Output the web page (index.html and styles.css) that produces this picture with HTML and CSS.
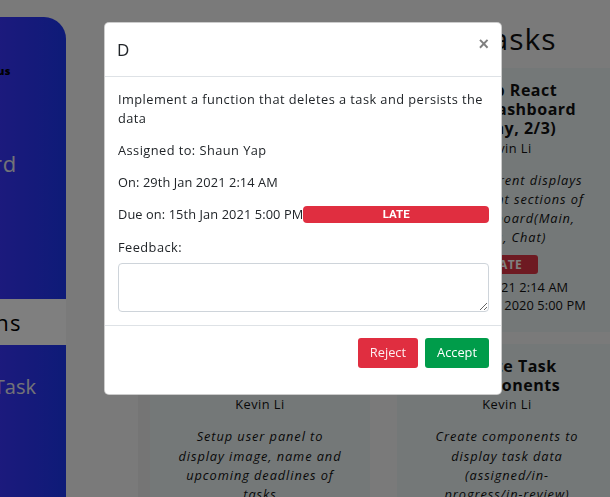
FILE: index.html
```html
<!DOCTYPE html>
<html lang="en">
<head>
<meta charset="utf-8">
<title>Tasks</title>
<link rel="stylesheet" href="styles.css">
</head>
<body>
<div class="app">
  <aside class="sidebar">
    <div class="brand">Zeus</div>
    <nav class="nav">
      <a class="nav-item nav-dash">Dashboard</a>
      <a class="nav-item nav-active">Submissions</a>
      <a class="nav-item nav-create">Create Task</a>
    </nav>
  </aside>
  <main class="main">
    <header class="page-head">
      <h1 class="page-title">Tasks</h1>
    </header>
    <section class="board">
      <article class="card">
        <h5 class="card-title">Setup User<br>Panel</h5>
        <p class="card-author">Kevin Li</p>
        <p class="card-desc">Setup user panel to<br>display image, name and<br>upcoming deadlines of<br>tasks</p>
      </article>
      <article class="card">
        <h5 class="card-title">Setup React<br>Main Dashboard<br>(Today, 2/3)</h5>
        <p class="card-author">Kevin Li</p>
        <p class="card-desc">Build different displays<br>for different sections of<br>the dashboard(Main,<br>Tasks, Chat)</p>
        <span class="card-badge">LATE</span>
        <p class="card-date">29 Jan 2021 2:14 AM<br>Due: 15 Dec 2020 5:00 PM</p>
      </article>
      <article class="card">
        <h5 class="card-title">Setup User<br>Panel</h5>
        <p class="card-author">Kevin Li</p>
        <p class="card-desc">Setup user panel to<br>display image, name and<br>upcoming deadlines of<br>tasks</p>
      </article>
      <article class="card">
        <h5 class="card-title">Create Task<br>Components</h5>
        <p class="card-author">Kevin Li</p>
        <p class="card-desc">Create components to<br>display task data<br>(assigned/in-<br>progress/in-review)</p>
      </article>
    </section>
  </main>
</div>

<div class="backdrop"></div>

<div class="modal">
  <div class="modal-content">
    <div class="modal-header">
      <h5 class="modal-title">D</h5>
      <button class="close" type="button" aria-label="Close">&times;</button>
    </div>
    <div class="modal-body">
      <p>Implement a function that deletes a task and persists the data</p>
      <p>Assigned to: Shaun Yap</p>
      <p class="dt">On: 29th Jan 2021 2:14 AM</p>
      <p class="dt due">Due on: 15th Jan 2021 5:00 PM<span class="badge-late">LATE</span></p>
      <label class="feedback-label" for="fb">Feedback:</label>
      <textarea id="fb" class="feedback"></textarea>
    </div>
    <div class="modal-footer">
      <button class="btn btn-reject" type="button">Reject</button>
      <button class="btn btn-accept" type="button">Accept</button>
    </div>
  </div>
</div>
</body>
</html>
```

FILE: styles.css
```css
* { box-sizing: border-box; }

html, body {
  margin: 0;
  height: 100%;
  overflow: hidden;
}

body {
  font-family: "Open Sans", "DejaVu Sans", sans-serif;
  font-size: 12.8px;
  line-height: 1.5;
  letter-spacing: 0.45px;
  color: #212529;
  background: #f4f4f4;
}

.app {
  display: flex;
  height: 497px;
  overflow: hidden;
}

/* ---------- sidebar ---------- */
.sidebar {
  flex: 0 0 66px;
  margin-top: 17px;
  border-top-right-radius: 22px;
  background: linear-gradient(90deg, #3834fa, #1c36f0);
  overflow: hidden;
  display: flex;
  flex-direction: column;
  padding-top: 46px;
}

.brand {
  display: flex;
  justify-content: flex-end;
  font-size: 11px;
  line-height: 16px;
  font-weight: 800;
  color: #000;
  padding-right: 55px;
  white-space: nowrap;
}

.nav {
  display: flex;
  flex-direction: column;
  margin-top: 61px;
}

.nav-item {
  display: flex;
  justify-content: flex-end;
  align-items: center;
  height: 46px;
  font-size: 22px;
  letter-spacing: 0.8px;
  white-space: nowrap;
  color: #e6e6ee;
}

.nav-dash { padding-right: 49px; }

.nav-active {
  margin-top: 113px;
  background: #fff;
  color: #000;
  padding-right: 44px;
  letter-spacing: 1.4px;
}

.nav-create {
  margin-top: 19px;
  font-size: 20px;
  letter-spacing: 0;
  padding-right: 30px;
}

/* ---------- main ---------- */
.main {
  flex: 1;
  min-width: 0;
  display: flex;
  flex-direction: column;
  overflow: hidden;
}

.page-head {
  flex: 0 0 68px;
  display: flex;
  align-items: flex-start;
  padding: 16px 0 0 408px;
}

.page-title {
  margin: 0;
  font-size: 30px;
  line-height: 45px;
  font-weight: 400;
  letter-spacing: 1px;
  color: #111;
  white-space: nowrap;
}

.board {
  margin-left: 72px;
  padding-left: 12px;
  display: grid;
  grid-template-columns: 220px 220px;
  column-gap: 27px;
  row-gap: 12px;
  align-items: start;
  background: linear-gradient(90deg, #ebebeb 12px, transparent 12px);
}

.card {
  background: #e8f0f0;
  padding: 13px 24px 18px;
  text-align: center;
  color: #111;
}

.card-title {
  margin: 0;
  font-size: 16px;
  line-height: 19.2px;
  font-weight: 700;
  letter-spacing: 0.5px;
  white-space: nowrap;
}

.card-author {
  margin: 0 0 13px;
  line-height: 19.2px;
}

.card-desc {
  margin: 0 0 7px;
  font-style: italic;
  line-height: 19.2px;
  letter-spacing: 0.92px;
  white-space: nowrap;
}

.card-badge {
  display: inline-block;
  vertical-align: top;
  width: 62px;
  height: 19px;
  line-height: 19px;
  border-radius: 3px;
  background: #dc3545;
  color: #fff;
  font-weight: 700;
  font-size: 12px;
}

.card-date {
  margin: 4px 0 0;
  line-height: 18px;
  letter-spacing: 0.1px;
  white-space: nowrap;
}

/* ---------- modal ---------- */
.backdrop {
  position: fixed;
  inset: 0;
  background: rgba(0, 0, 0, 0.5);
}

.modal {
  position: fixed;
  inset: 0;
  display: flex;
  justify-content: center;
  align-items: flex-start;
  padding: 22px 4px 0 0;
}

.modal-content {
  width: 398px;
  background: #fff;
  border: 1px solid rgba(0, 0, 0, 0.2);
  border-radius: 5px;
  display: flex;
  flex-direction: column;
}

.modal-header {
  display: flex;
  justify-content: space-between;
  align-items: flex-start;
  padding: 14px 12px 13px 12px;
  border-bottom: 1px solid #dee2e6;
}

.modal-title {
  margin: 0;
  font-size: 17px;
  line-height: 25.5px;
  font-weight: 400;
  color: #212529;
}

.close {
  border: 0;
  background: transparent;
  padding: 0;
  margin: -2px 0 0;
  font-family: "Liberation Sans", sans-serif;
  font-size: 18px;
  font-weight: 700;
  line-height: 1;
  color: #000;
  opacity: 0.5;
  cursor: pointer;
}

.modal-body {
  padding: 13px 12px 13px 13px;
}

.modal-body p {
  margin: 0 0 13px;
  line-height: 19.2px;
}

.modal-body .dt {
  letter-spacing: 0.1px;
}

.due {
  display: flex;
  align-items: center;
}

.badge-late {
  flex: 1;
  height: 17px;
  line-height: 17px;
  border-radius: 4px;
  background: #e02e40;
  color: #fff;
  text-align: center;
  font-family: "Roboto", sans-serif;
  font-size: 11.5px;
  font-weight: 700;
  letter-spacing: 0;
}

.feedback-label {
  display: block;
  line-height: 19.2px;
  margin-bottom: 6px;
}

.feedback {
  display: block;
  width: 100%;
  height: 49px;
  border: 1px solid #ced4da;
  border-radius: 4px;
  resize: vertical;
  font: inherit;
}

.modal-footer {
  display: flex;
  justify-content: flex-end;
  gap: 7px;
  padding: 12px 12px 26px;
  border-top: 1px solid #dee2e6;
}

.btn {
  height: 30px;
  border: 0;
  border-radius: 3px;
  padding: 0 12px;
  font: inherit;
  color: #fff;
  cursor: pointer;
}

.btn-reject { background: #e02e40; color: #fdeef0; }
.btn-accept { background: #009c4a; }
```
